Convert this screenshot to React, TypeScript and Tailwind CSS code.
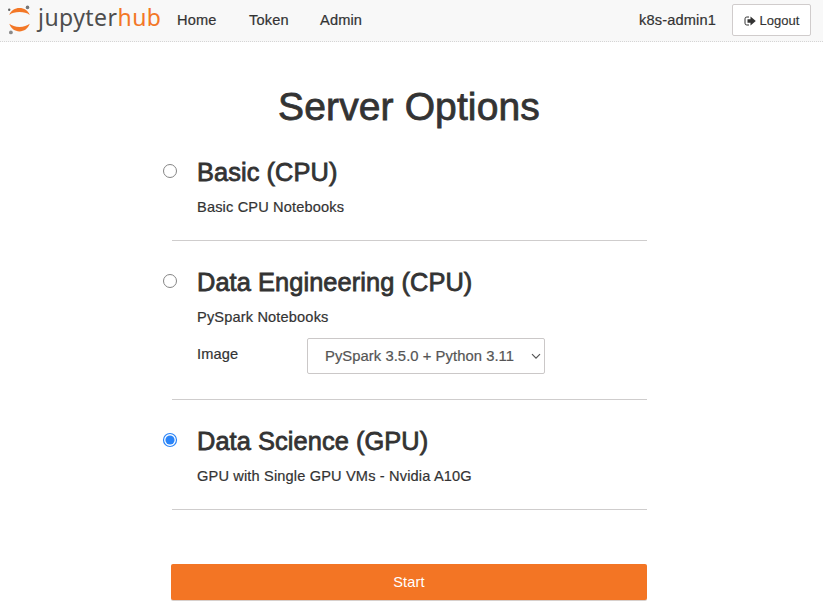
import React from "react";

const heading = "font-normal text-[#333] [-webkit-text-stroke:0.8px_#333]";
const body = "text-[14.6px] tracking-[0.15px] text-[#333] [-webkit-text-stroke:0.2px_#333]";

function Logo() {
  return (
    <a href="#" aria-label="jupyterhub" className="flex h-10 w-[165px] shrink-0 pl-[7px]">
      <svg className="mt-[5px] h-[30px] w-[25px] shrink-0" viewBox="0 0 25 30">
        <path d="M2.3 9.9C4 5.5 7.9 3 12.5 3s8.5 2.5 10.2 6.9C20.2 7.9 16.6 7 12.5 7S4.8 7.9 2.3 9.9Z" fill="#f37726" />
        <path d="M2.3 18.8c1.7 4.9 5.6 7.6 10.2 7.6s8.5-2.7 10.2-7.6c-2.5 2.1-6.1 3.1-10.2 3.1s-7.7-1-10.2-3.1Z" fill="#f37726" />
        <circle cx="20.5" cy="2.4" r="1.8" fill="#767677" />
        <circle cx="2.2" cy="4.8" r="1.2" fill="#616262" />
        <circle cx="3.9" cy="27.4" r="1.9" fill="#8a8a8a" />
      </svg>
      <span className="ml-[6px] whitespace-nowrap font-['Noto_Sans',sans-serif] text-[23px] leading-[34px] tracking-[0.45px] text-[#4e4e4e]">
        jupyter<span className="text-[#f37726]">hub</span>
      </span>
    </a>
  );
}

function Header() {
  return (
    <header className="flex h-[42px] items-start border-b border-dotted border-[#d5d5d5] bg-[#f8f8f8] pr-3">
      <Logo />
      <nav className={`ml-[12px] flex gap-[31px] leading-[41px] ${body}`}>
        <a href="#" className="w-[41px]">Home</a>
        <a href="#" className="w-[40px]">Token</a>
        <a href="#">Admin</a>
      </nav>
      <span className={`ml-auto leading-[41px] ${body}`}>k8s-admin1</span>
      <button className="ml-4 mt-[4px] flex h-8 w-[79px] items-center justify-center gap-1 rounded-[2px] border border-[#d0cccc] bg-white pt-px text-[13px] text-[#333] [-webkit-text-stroke:0.15px_#333]">
        <svg className="h-[10px] w-3" viewBox="0 0 12 10">
          <path d="M5 1H2.8A1.8 1.8 0 0 0 1 2.8v4.4A1.8 1.8 0 0 0 2.8 9H5" fill="none" stroke="#333" />
          <path d="M3.5 3.3H6.5V.5L11.8 5 6.5 9.5V6.7H3.5Z" fill="#333" />
        </svg>
        Logout
      </button>
    </header>
  );
}

interface OptionProps {
  title: string;
  description: string;
  checked?: boolean;
  children?: React.ReactNode;
}

function Option({ title, description, checked, children }: OptionProps) {
  return (
    <label className="flex">
      <input type="radio" name="profile" defaultChecked={checked} className="peer sr-only" />
      <svg className="mt-[7px] size-[16px] shrink-0" viewBox="0 0 16 16">
        <circle cx="8" cy="8" r="6.5" fill="#fff" stroke={checked ? "#2a84f8" : "#858585"} strokeWidth={checked ? 1.2 : 1} />
        {checked && <circle cx="8" cy="8" r="4.6" fill="#2a84f8" />}
      </svg>
      <div className="ml-[19px] pt-px">
        <h3 className={`text-[25.4px] leading-[30px] tracking-[0.07px] whitespace-nowrap ${heading}`}>{title}</h3>
        <p className={`mt-[10px] leading-5 ${body}`}>{description}</p>
        {children}
      </div>
    </label>
  );
}

export default function App() {
  return (
    <div className="h-[609px] overflow-hidden bg-white font-['Liberation_Sans',Arial,sans-serif]">
      <Header />
      <h1 className={`mt-[43px] pr-[5px] text-center text-[39px] leading-[44px] tracking-[0.12px] ${heading}`}>Server Options</h1>
      <main className="ml-[162px] w-[485px]">
        <section className="mt-[27px] h-[84px]">
          <Option title="Basic (CPU)" description="Basic CPU Notebooks" />
        </section>
        <hr className="ml-[10px] border-[#cfcdcd]" />
        <section className="mt-[25px] h-[133px]">
          <Option title="Data Engineering (CPU)" description="PySpark Notebooks">
            <div className="mt-[11px] flex">
              <span className={`w-[110px] leading-8 ${body}`}>Image</span>
              <div className="flex h-9 w-[238px] items-center justify-between rounded-[2px] border border-[#cbc8c8] pl-[17px] pr-[3px] text-[14.8px] tracking-[0.05px] text-[#555] [-webkit-text-stroke:0.2px_#555]">
                PySpark 3.5.0 + Python 3.11
                <svg className="h-[7px] w-[10px]" viewBox="0 0 10 7">
                  <path d="m1 1.2 4 4 4-4" fill="none" stroke="#555" strokeWidth="1.2" />
                </svg>
              </div>
            </div>
          </Option>
        </section>
        <hr className="ml-[10px] border-[#cfcdcd]" />
        <section className="mt-[25px] h-[84px]">
          <Option title="Data Science (GPU)" description="GPU with Single GPU VMs - Nvidia A10G" checked />
        </section>
        <hr className="ml-[10px] border-[#cfcdcd]" />
        <button className="ml-[9px] mt-[54px] block h-9 w-[476px] rounded-[2px] bg-[#f37524] pt-0.5 text-[14.6px] tracking-[0.15px] text-white shadow-[0_1px_0_#d8d0cc]">
          Start
        </button>
      </main>
    </div>
  );
}
